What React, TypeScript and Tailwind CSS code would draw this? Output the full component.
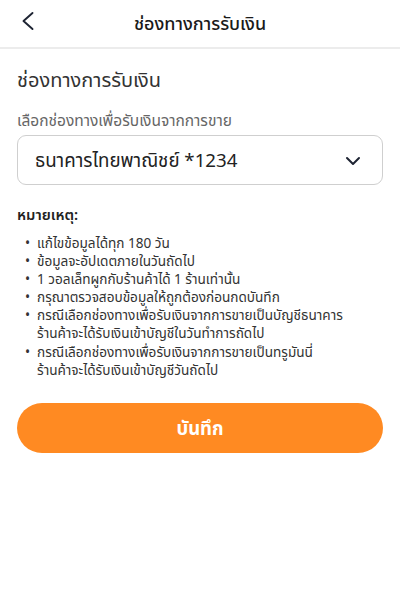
const notes = [
    ['แก้ไขข้อมูลได้ทุก 180 วัน'],
    ['ข้อมูลจะอัปเดตภายในวันถัดไป'],
    ['1 วอลเล็ทผูกกับร้านค้าได้ 1 ร้านเท่านั้น'],
    ['กรุณาตรวจสอบข้อมูลให้ถูกต้องก่อนกดบันทึก'],
    ['กรณีเลือกช่องทางเพื่อรับเงินจากการขายเป็นบัญชีธนาคาร', 'ร้านค้าจะได้รับเงินเข้าบัญชีในวันทำการถัดไป'],
    ['กรณีเลือกช่องทางเพื่อรับเงินจากการขายเป็นทรูมันนี่', 'ร้านค้าจะได้รับเงินเข้าบัญชีวันถัดไป'],
];

function App() {
    return (
        <div className="min-h-screen w-full bg-white text-[#222] font-['Noto_Sans','Noto_Sans_Thai',sans-serif]">
            {/* Header */}
            <div className="relative flex h-[49px] items-center justify-center border-b-2 border-[#ececec]">
                <button className="absolute left-[21px] top-[11px] text-[#1e2433]">
                    <svg width="14" height="20" viewBox="0 0 14 20" fill="none" stroke="currentColor" strokeWidth="1.9" strokeLinecap="round" strokeLinejoin="round">
                        <polyline points="11.5,2 2.5,10 11.5,18" />
                    </svg>
                </button>
                <h1 className="text-[18px] font-medium text-[#1a1a1a]">ช่องทางการรับเงิน</h1>
            </div>

            <div className="flex flex-col px-[17px]">
                <h2 className="mt-[17px] text-[20px] leading-[28px] text-[#333]">ช่องทางการรับเงิน</h2>
                <p className="mt-[15px] text-[15.5px] leading-[22px] text-[#666]">เลือกช่องทางเพื่อรับเงินจากการขาย</p>

                {/* Select box */}
                <div className="mt-[4px] flex h-[50px] items-center justify-between rounded-[9px] border border-[#cfcfcf] pl-[17px] pr-[21px]">
                    <span className="text-[18.7px] text-[#222]">ธนาคารไทยพาณิชย์ *1234</span>
                    <svg width="16" height="10" viewBox="0 0 16 10" fill="none" stroke="#1e2433" strokeWidth="2" strokeLinecap="round" strokeLinejoin="round" className="mt-[1px]">
                        <polyline points="2,2 8,8 14,2" />
                    </svg>
                </div>

                {/* Notes */}
                <p className="mt-[18px] text-[14.8px] leading-[22px] font-semibold text-[#222]">หมายเหตุ:</p>
                <ul className="mt-[9px] flex flex-col pl-[8px] text-[13.6px] leading-[18.1px] text-[#333]">
                    {notes.map((n) => (
                        <li key={n[0]} className="flex">
                            <span className="w-[12px] shrink-0">•</span>
                            <span className="flex flex-col">
                                {n.map((line) => (
                                    <span key={line}>{line}</span>
                                ))}
                            </span>
                        </li>
                    ))}
                </ul>

                <button className="mt-[24px] h-[50px] w-full rounded-full bg-[#ff8a22] text-[18.5px] font-bold text-white">
                    บันทึก
                </button>
            </div>
        </div>
    );
}

export default App;
